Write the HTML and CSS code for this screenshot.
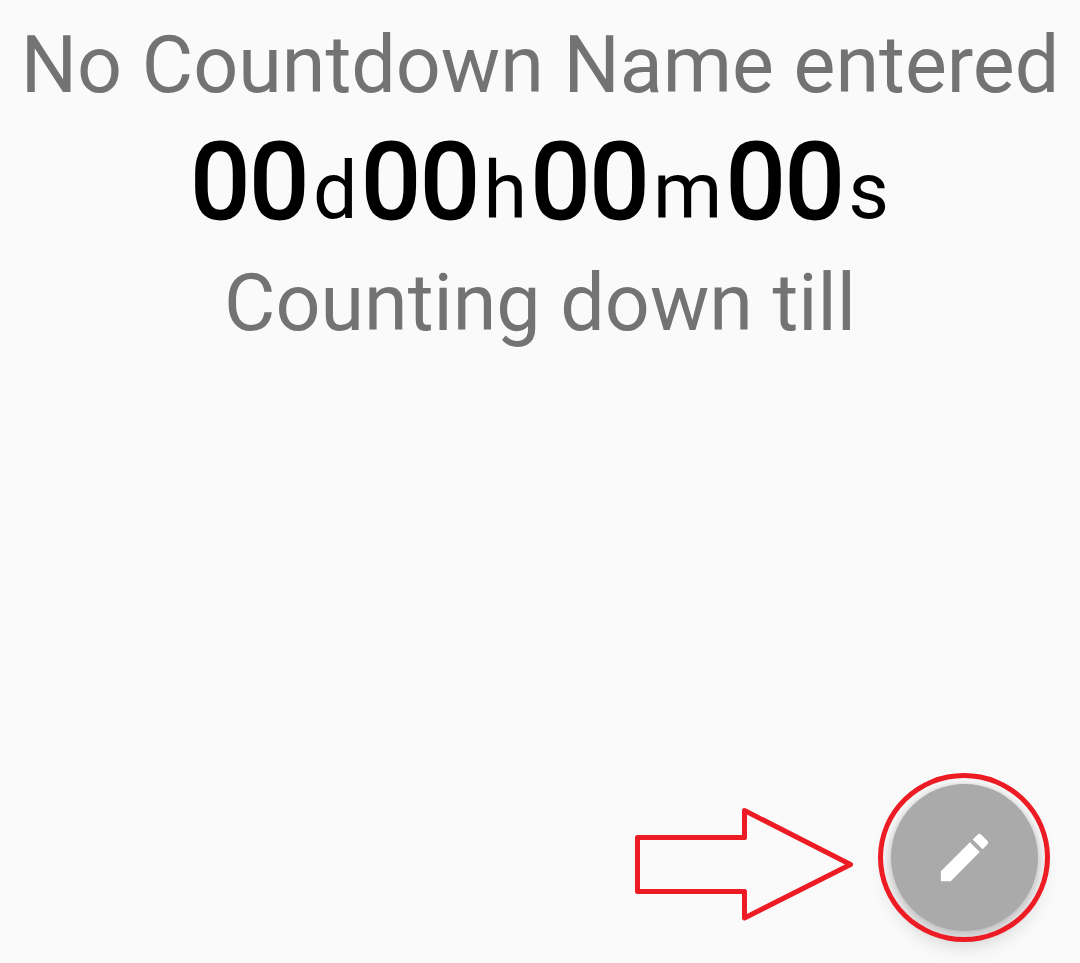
FILE: index.html
```html
<!DOCTYPE html>
<html lang="en">
<head>
<meta charset="utf-8">
<meta name="viewport" content="width=device-width, initial-scale=1">
<title>Countdown</title>
<link rel="stylesheet" href="styles.css">
</head>
<body>
<main class="screen">
  <h1 class="label">No Countdown Name entered</h1>
  <p class="timer"><b class="num">00</b><span class="unit">d</span><b class="num">00</b><span class="unit">h</span><b class="num">00</b><span class="unit">m</span><b class="num">00</b><span class="unit">s</span></p>
  <p class="label">Counting down till</p>
  <div class="actions">
    <svg class="arrow" width="220" height="116" viewBox="634 806 220 116" aria-hidden="true">
      <path d="M637.500 837.500H744.500V810.500L850.500 864.500L744.500 918V891.500H637.500Z"/>
    </svg>
    <div class="ring">
      <button class="fab" type="button" aria-label="Edit countdown">
        <svg class="pencil" viewBox="0 0 24 24" aria-hidden="true"><path d="M3 17.250V21h3.750L17.810 9.940l-3.750-3.750L3 17.250zM20.710 7.040a1 1 0 0 0 0-1.410l-2.340-2.340a1 1 0 0 0-1.410 0l-1.830 1.830 3.750 3.750 1.830-1.830z"/></svg>
      </button>
    </div>
  </div>
</main>
</body>
</html>
```
FILE: styles.css
```css
* { box-sizing: border-box; }
body {
  margin: 0;
  background: #fafafa;
  font-family: Roboto, "Liberation Sans", sans-serif;
}
.screen {
  min-height: 100vh;
  display: flex;
  flex-direction: column;
  padding: 19px 0 21px;
}
.label {
  margin: 0;
  font-size: 79px;
  line-height: 92px;
  font-weight: 400;
  color: #737373;
  text-align: center;
  white-space: nowrap;
}
.timer {
  margin: 0;
  padding-top: 6px;
  display: flex;
  justify-content: center;
  align-items: baseline;
  gap: 4px;
  line-height: 132px;
  color: #000;
}
.num {
  font-size: 105px;
  font-weight: 400;
  -webkit-text-stroke: 3px #000;
}
.unit { font-size: 79px; }
.actions {
  margin-top: auto;
  padding-right: 30px;
  display: flex;
  justify-content: flex-end;
  align-items: center;
  gap: 24px;
}
.arrow {
  margin-top: 13px;
  fill: none;
  stroke: #ed1c24;
  stroke-width: 5;
  stroke-linejoin: round;
}
.ring {
  position: relative;
  width: 172px;
  height: 169px;
  display: grid;
  place-items: center;
}
.ring::after {
  content: "";
  position: absolute;
  inset: 0;
  border: 5px solid #ed1c24;
  border-radius: 50%;
  pointer-events: none;
}
.fab {
  width: 147px;
  height: 147px;
  padding: 0;
  border: 0;
  border-radius: 50%;
  background: #aaa;
  display: grid;
  place-items: center;
  box-shadow: 0 12px 22px rgba(0, 0, 0, .2), 0 0 6px rgba(0, 0, 0, .14);
}
.pencil { width: 63px; height: 63px; fill: #fff; }
```
